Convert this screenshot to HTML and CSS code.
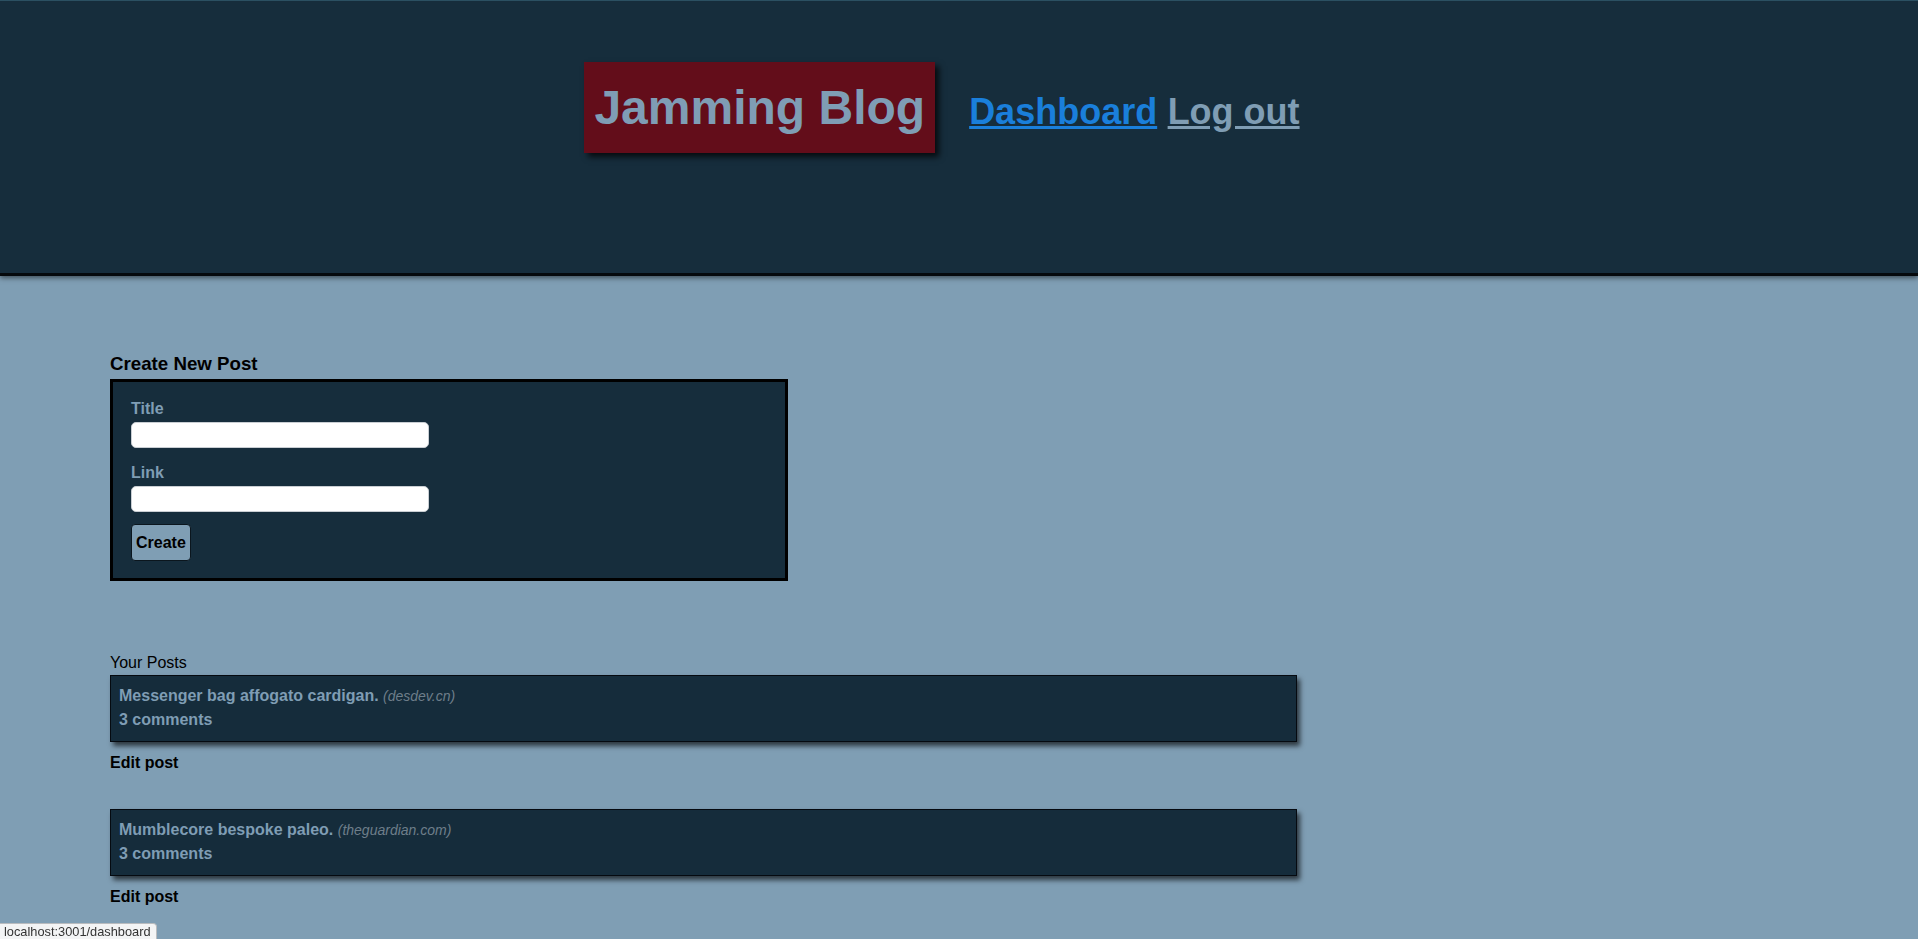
FILE: index.html
```html
<!DOCTYPE html>
<html lang="en">
<head>
<meta charset="utf-8">
<title>Jamming Blog - Dashboard</title>
<link rel="stylesheet" href="styles.css">
</head>
<body>
<header class="site-header">
  <div class="header-inner">
    <h1 class="logo">Jamming Blog</h1>
    <nav class="nav">
      <a class="nav-link nav-link-active" href="#">Dashboard</a>
      <a class="nav-link nav-link-next" href="#">Log out</a>
    </nav>
  </div>
</header>
<main class="main">
  <section class="create">
    <h3 class="section-title">Create New Post</h3>
    <form class="post-form">
      <label class="form-label" for="title">Title</label>
      <input class="form-input" id="title" type="text">
      <label class="form-label" for="link">Link</label>
      <input class="form-input" id="link" type="text">
      <button class="form-button" type="button">Create</button>
    </form>
  </section>
  <section class="posts">
    <div class="posts-title">Your Posts</div>
    <div class="post">
      <div class="post-card">
        <div class="post-head"><span class="post-title">Messenger bag affogato cardigan.</span> <span class="post-site">(desdev.cn)</span></div>
        <div class="post-comments">3 comments</div>
      </div>
      <a class="edit-link" href="#">Edit post</a>
    </div>
    <div class="post">
      <div class="post-card">
        <div class="post-head"><span class="post-title">Mumblecore bespoke paleo.</span> <span class="post-site">(theguardian.com)</span></div>
        <div class="post-comments">3 comments</div>
      </div>
      <a class="edit-link" href="#">Edit post</a>
    </div>
  </section>
</main>
<div class="status-tip">localhost:3001/dashboard</div>
</body>
</html>
```
FILE: styles.css
```css
* { box-sizing: border-box; }
html, body {
  margin: 0;
  padding: 0;
}
body {
  background: #7f9eb4;
  font-family: "Liberation Sans", Arial, sans-serif;
  color: #000;
  min-height: 939px;
}
.site-header {
  background: #162d3c;
  border-top: 1px solid #2b5062;
  border-bottom: 3px solid #05090c;
  box-shadow: 0 2px 5px rgba(0, 0, 0, 0.5);
  padding: 61px 0 120px;
}
.header-inner {
  display: flex;
  justify-content: center;
  align-items: baseline;
}
.logo {
  margin: 0;
  padding: 18px 10px;
  font-size: 48px;
  font-weight: bold;
  line-height: normal;
  background: #630d1a;
  color: #7f9db5;
  box-shadow: 4px 4px 6px rgba(0, 0, 0, 0.75);
}
.nav {
  margin: 0 34px;
}
.nav-link {
  font-size: 36px;
  font-weight: bold;
  color: #7f9db4;
  text-decoration: underline;
}
.nav-link-active {
  color: #1a7fdb;
}
.nav-link-next {
  margin-left: 6px;
}
.main {
  padding: 0 0 0 110px;
}
.section-title {
  margin: 77px 0 4px;
  font-size: 18.72px;
  font-weight: bold;
  line-height: normal;
}
.post-form {
  display: flex;
  flex-direction: column;
  align-items: flex-start;
  width: 678px;
  background: #162d3c;
  border: 3px solid #000;
  padding: 18px 18px 17px;
}
.form-label {
  display: block;
  font-size: 16px;
  font-weight: bold;
  line-height: normal;
  color: #7f9db4;
  margin-bottom: 4px;
}
.form-input {
  width: 298px;
  height: 26px;
  margin: 0 0 16px;
  background: #fff;
  border: 1px solid #c9ced3;
  border-radius: 5px;
  padding: 2px 6px;
  font: 14px "Liberation Sans", Arial, sans-serif;
}
#link {
  margin-bottom: 12px;
}
.form-button {
  background: #7f9eb4;
  color: #000;
  border: 1px solid #0b161e;
  border-radius: 4px;
  padding: 9px 4px;
  font: bold 16px/17px "Liberation Sans", Arial, sans-serif;
}
.posts {
  margin-top: 73px;
}
.posts-title {
  font-size: 16px;
  line-height: normal;
  margin-bottom: 3px;
}
.post {
  display: flex;
  flex-direction: column;
  align-items: flex-start;
  margin-bottom: 37px;
}
.post-card {
  width: 1187px;
  background: #152c3b;
  border: 1px solid #050a10;
  padding: 8px 8px 9px;
  line-height: 24px;
  box-shadow: 3px 4px 5px rgba(0, 0, 0, 0.65);
  color: #7f9db4;
}
.post-title,
.post-comments {
  font-size: 16px;
  font-weight: bold;
}
.post-site {
  font-size: 14px;
  font-style: italic;
  color: #6e7e8a;
}
.edit-link {
  margin-top: 12px;
  font-size: 16px;
  font-weight: bold;
  line-height: normal;
  color: #000;
  text-decoration: none;
}
.status-tip {
  position: fixed;
  left: 0;
  bottom: 0;
  padding: 1px 5px 0 4px;
  background: #f3f4f5;
  border: 1px solid #b9bcbf;
  border-left: none;
  border-bottom: none;
  border-top-right-radius: 4px;
  font-size: 12.8px;
  line-height: 14px;
  color: #333;
}
```
